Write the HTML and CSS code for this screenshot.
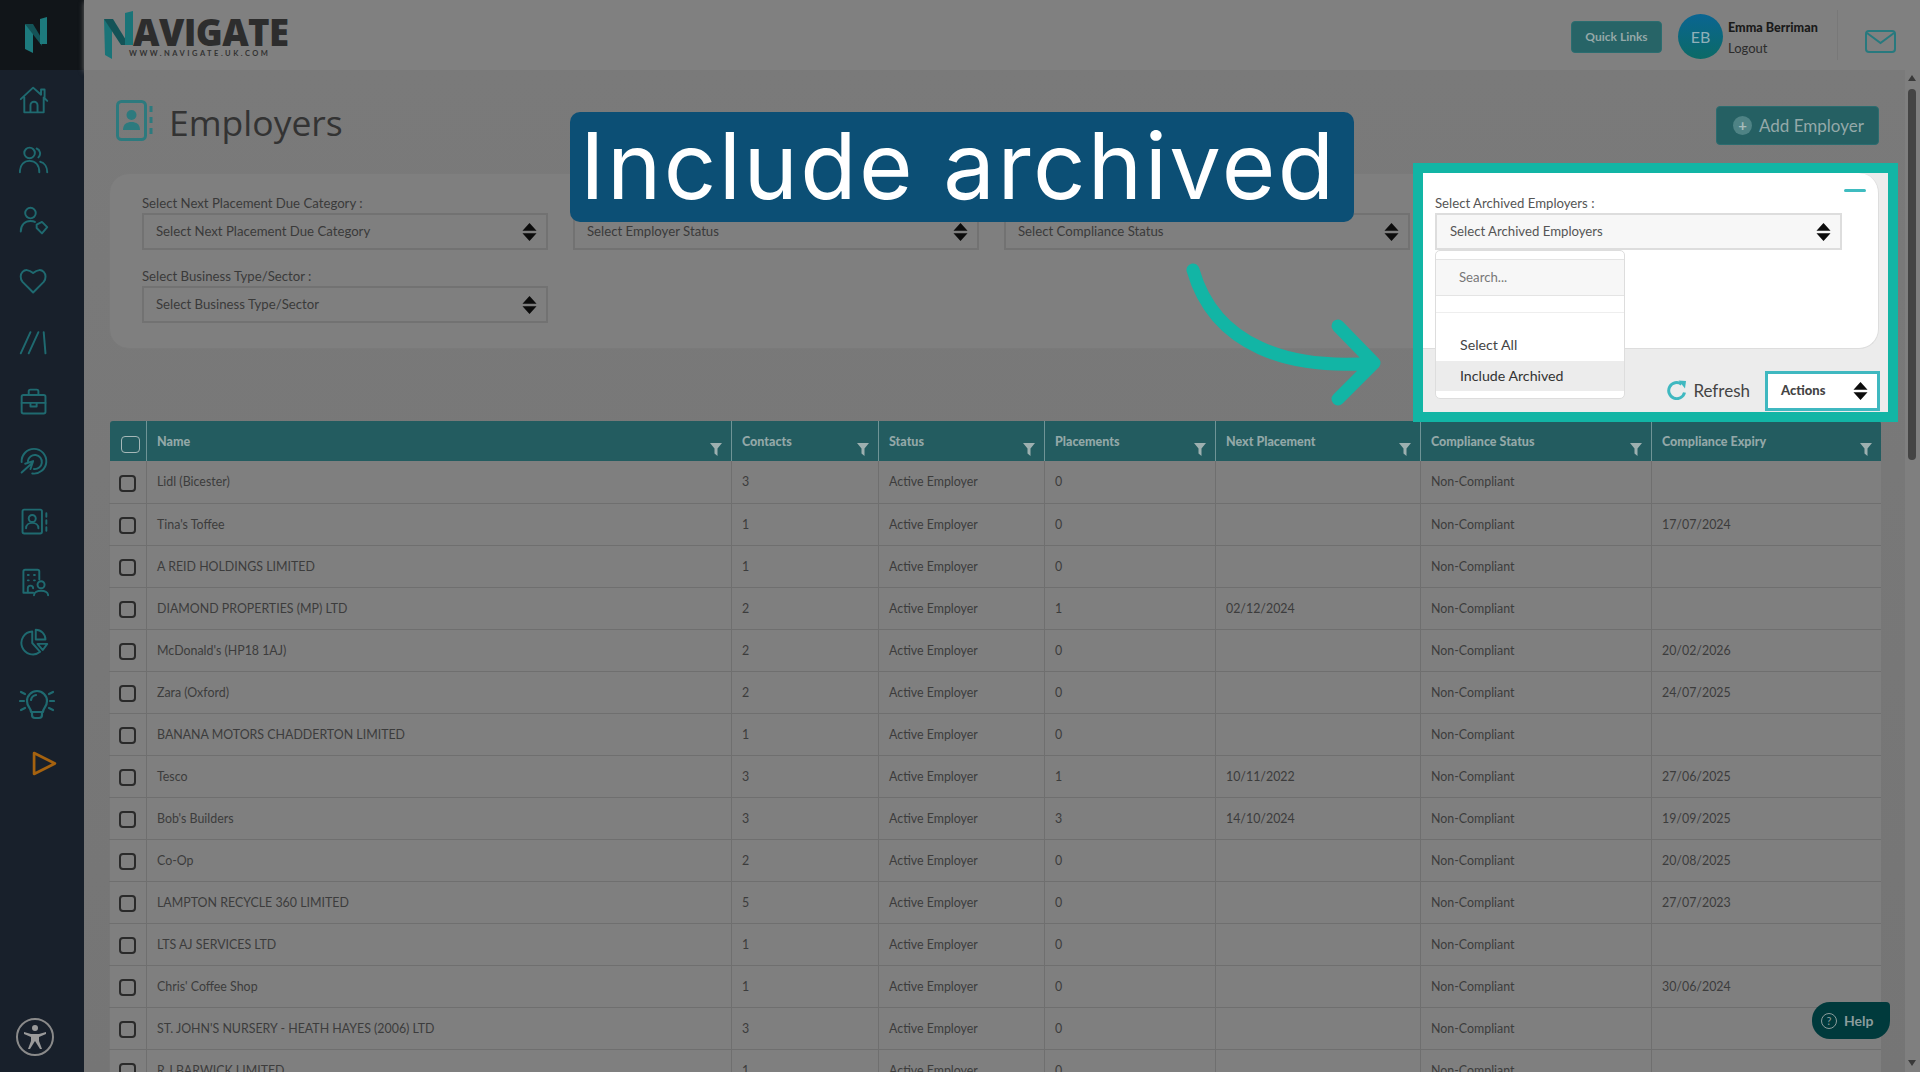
FILE: index.html
```html
<!DOCTYPE html>
<html>
<head>
	<title>Employers</title>
	<link rel="stylesheet" href="styles.css">
</head>
<body>
<svg class="defs" width="0" height="0">
	<symbol id="sort" viewBox="0 0 16 20" preserveAspectRatio="none"><path d="M8 0l7.500 8.500h-15zM8 20l-7.500-8.500h15z"/></symbol>
	<symbol id="funnel" viewBox="0 0 12 13"><path d="M0 0h12l-4.500 5.500v7.500l-3-2.500v-5z"/></symbol>
	<symbol id="contact" viewBox="0 0 38 42"><rect x="1.500" y="1.500" width="28" height="38" rx="4" fill="none" stroke="currentColor" stroke-width="3"/><circle cx="15.500" cy="15" r="5" fill="currentColor"/><path d="M7 30c0-6 4-8 8.500-8s8.500 2 8.500 8z" fill="currentColor"/><path d="M35 6v6M35 17v6M35 28v6" stroke="currentColor" stroke-width="3"/></symbol>
</svg>

<aside class="sidebar">
	<div class="brand">
		<svg width="24" height="36" viewBox="0 0 24 36"><path d="M1 7l8 5v24l-8-4z" fill="#1d7a7d"/><path d="M1 7h8l9 15v7z" fill="#145357"/><path d="M16 2l7-2v27h-7z" fill="#1d7a7d"/></svg>
	</div>
	<nav class="side-nav">
		<a><svg viewBox="0 0 34 34"><path d="M2 16L16 3l9 8v-6h4v10l3 3M6 14v17h22V14M13 31v-8a4 4 0 0 1 8 0v8"/></svg></a>
		<a><svg viewBox="0 0 34 34"><circle cx="12" cy="9" r="6"/><path d="M1 31c0-9 5-13 11-13s11 4 11 13M20 4a6 6 0 0 1 2 10M24 19c5 1 8 6 8 12"/></svg></a>
		<a><svg viewBox="0 0 34 34"><circle cx="13" cy="8" r="6"/><path d="M2 29c0-8 5-12 11-12 2 0 4 .4 5 1M20 21l6-3 6 6-6 7-6-6z"/></svg></a>
		<a><svg viewBox="0 0 34 34"><path d="M16 30L4 18C-2 10 6-1 16 8c10-9 18 2 12 10z"/></svg></a>
		<a><svg viewBox="0 0 34 34"><path d="M2 31L13 7M11 31L22 7M28 7l2 24"/></svg></a>
		<a><svg viewBox="0 0 34 34"><rect x="3" y="9" width="27" height="21" rx="2"/><path d="M11 9V5a2 2 0 0 1 2-2h7a2 2 0 0 1 2 2v4M3 18h27M13 18v4h7v-4"/></svg></a>
		<a><svg viewBox="0 0 34 34"><path d="M3 17A14 14 0 1 1 15 30M10 16a8 8 0 1 1 7 9M3 29l11-10M7 19l9-3-3 9"/></svg></a>
		<a><svg viewBox="0 0 34 34"><rect x="4" y="3" width="22" height="27" rx="2"/><circle cx="15" cy="13" r="4"/><path d="M8 24c0-8 14-8 14 0M31 7v4M31 15v4M31 23v4"/></svg></a>
		<a><svg viewBox="0 0 34 34"><path d="M16 28H5V4a2 2 0 0 1 2-2h14a2 2 0 0 1 2 2v9M10 8h1M17 8h1M10 14h1M17 14h1M10 28v-5a3 3 0 0 1 6 0"/><circle cx="25" cy="19" r="4"/><path d="M17 31c0-7 16-7 16 0"/></svg></a>
		<a><svg viewBox="0 0 34 34"><path d="M15 4a13 13 0 1 0 9 23l-9-10zM19 2a11 11 0 0 1 11 11H19zM21 18h11l-5 7z"/></svg></a>
		<a class="wide"><svg viewBox="0 0 36 34"><path d="M12 26c0-4-4-5-4-11a10 10 0 0 1 20 0c0 6-4 7-4 11zM13 26v3a3 3 0 0 0 3 3h4a3 3 0 0 0 3-3v-3M12 14a6 6 0 0 1 5-5M2 6l4 2M34 6l-4 2M1 15h4M35 15h-4M2 24l4-2M34 24l-4-2"/></svg></a>
		<a class="play"><svg viewBox="0 0 24 24"><path d="M2 2l20 10L2 22z"/></svg></a>
	</nav>
	<div class="access">
		<svg width="24" height="26" viewBox="0 0 24 26"><circle cx="12" cy="4" r="3"/><path d="M1 8l7 2h8l7-2v2l-7 3v4l3 8h-2l-5-8-5 8H5l3-8v-4L1 10z"/></svg>
	</div>
</aside>

<div class="wrap">
	<header class="topbar">
		<div class="logo">
			<svg width="31" height="48" viewBox="0 0 31 48"><path d="M0 8l8 5v35l-7-4z" fill="#1a7478"/><path d="M0 8h9l16 26H17z" fill="#145357"/><path d="M21 2l8-2v34h-8z" fill="#1a7478"/></svg>
			<div>
				<div class="logo-name">AVIGATE</div>
				<div class="logo-url">WWW.NAVIGATE.UK.COM</div>
			</div>
		</div>
		<div class="top-right">
			<a class="quick">Quick Links</a>
			<div class="avatar">EB</div>
			<div class="who">
				<b>Emma Berriman</b>
				<span>Logout</span>
			</div>
			<div class="mail">
				<svg width="31" height="23" viewBox="0 0 31 23"><rect x="1" y="1" width="29" height="21" rx="3"/><path d="M2 3l13.500 10L29 3"/></svg>
			</div>
		</div>
	</header>

	<div class="body-row">
		<main class="content">
			<div class="title-row">
				<h1 class="page-title"><svg class="title-icon" width="38" height="42"><use href="#contact"/></svg>Employers</h1>
				<a class="add-btn"><span class="plus">+</span>Add Employer</a>
			</div>

			<section class="filters">
				<div class="field"><label>Select Next Placement Due Category :</label><div class="select">Select Next Placement Due Category<svg class="sort"><use href="#sort"/></svg></div></div>
				<div class="field"><label></label><div class="select">Select Employer Status<svg class="sort"><use href="#sort"/></svg></div></div>
				<div class="field"><label></label><div class="select">Select Compliance Status<svg class="sort"><use href="#sort"/></svg></div></div>
				<div class="field"></div>
				<div class="field"><label>Select Business Type/Sector :</label><div class="select">Select Business Type/Sector<svg class="sort"><use href="#sort"/></svg></div></div>
			</section>

			<table class="grid">
				<colgroup>
					<col class="c-check"><col class="c-name"><col class="c-contacts"><col class="c-status"><col class="c-place"><col class="c-next"><col class="c-comp"><col class="c-exp">
				</colgroup>
				<thead>
					<tr>
						<th><span class="box box-head"></span></th>
						<th>Name<svg class="funnel"><use href="#funnel"/></svg></th>
						<th>Contacts<svg class="funnel"><use href="#funnel"/></svg></th>
						<th>Status<svg class="funnel"><use href="#funnel"/></svg></th>
						<th>Placements<svg class="funnel"><use href="#funnel"/></svg></th>
						<th>Next Placement<svg class="funnel"><use href="#funnel"/></svg></th>
						<th>Compliance Status<svg class="funnel"><use href="#funnel"/></svg></th>
						<th>Compliance Expiry<svg class="funnel"><use href="#funnel"/></svg></th>
					</tr>
				</thead>
				<tbody>
					<tr><td><span class="box"></span></td><td>Lidl (Bicester)</td><td>3</td><td>Active Employer</td><td>0</td><td></td><td>Non-Compliant</td><td></td></tr>
					<tr><td><span class="box"></span></td><td>Tina's Toffee</td><td>1</td><td>Active Employer</td><td>0</td><td></td><td>Non-Compliant</td><td>17/07/2024</td></tr>
					<tr><td><span class="box"></span></td><td>A REID HOLDINGS LIMITED</td><td>1</td><td>Active Employer</td><td>0</td><td></td><td>Non-Compliant</td><td></td></tr>
					<tr><td><span class="box"></span></td><td>DIAMOND PROPERTIES (MP) LTD</td><td>2</td><td>Active Employer</td><td>1</td><td>02/12/2024</td><td>Non-Compliant</td><td></td></tr>
					<tr><td><span class="box"></span></td><td>McDonald's (HP18 1AJ)</td><td>2</td><td>Active Employer</td><td>0</td><td></td><td>Non-Compliant</td><td>20/02/2026</td></tr>
					<tr><td><span class="box"></span></td><td>Zara (Oxford)</td><td>2</td><td>Active Employer</td><td>0</td><td></td><td>Non-Compliant</td><td>24/07/2025</td></tr>
					<tr><td><span class="box"></span></td><td>BANANA MOTORS CHADDERTON LIMITED</td><td>1</td><td>Active Employer</td><td>0</td><td></td><td>Non-Compliant</td><td></td></tr>
					<tr><td><span class="box"></span></td><td>Tesco</td><td>3</td><td>Active Employer</td><td>1</td><td>10/11/2022</td><td>Non-Compliant</td><td>27/06/2025</td></tr>
					<tr><td><span class="box"></span></td><td>Bob's Builders</td><td>3</td><td>Active Employer</td><td>3</td><td>14/10/2024</td><td>Non-Compliant</td><td>19/09/2025</td></tr>
					<tr><td><span class="box"></span></td><td>Co-Op</td><td>2</td><td>Active Employer</td><td>0</td><td></td><td>Non-Compliant</td><td>20/08/2025</td></tr>
					<tr><td><span class="box"></span></td><td>LAMPTON RECYCLE 360 LIMITED</td><td>5</td><td>Active Employer</td><td>0</td><td></td><td>Non-Compliant</td><td>27/07/2023</td></tr>
					<tr><td><span class="box"></span></td><td>LTS AJ SERVICES LTD</td><td>1</td><td>Active Employer</td><td>0</td><td></td><td>Non-Compliant</td><td></td></tr>
					<tr><td><span class="box"></span></td><td>Chris' Coffee Shop</td><td>1</td><td>Active Employer</td><td>0</td><td></td><td>Non-Compliant</td><td>30/06/2024</td></tr>
					<tr><td><span class="box"></span></td><td>ST. JOHN'S NURSERY - HEATH HAYES (2006) LTD</td><td>3</td><td>Active Employer</td><td>0</td><td></td><td>Non-Compliant</td><td></td></tr>
					<tr><td><span class="box"></span></td><td>R J BARWICK LIMITED</td><td>1</td><td>Active Employer</td><td>0</td><td></td><td>Non-Compliant</td><td></td></tr>
				</tbody>
			</table>
		</main>

		<div class="scrollbar">
			<i class="arrow-up"></i>
			<div class="thumb"></div>
			<i class="arrow-down"></i>
		</div>
	</div>
</div>

<!-- things laid over the dimmed page -->
<div class="help"><span class="help-q">?</span>Help</div>

<div class="tag">Include archived</div>

<svg class="pointer" width="210" height="150" viewBox="0 0 210 150">
	<path d="M8 8C30 85 105 108 189 101M153 64l36 37-36 36"/>
</svg>

<div class="spot">
	<div class="spot-card">
		<a class="collapse"></a>
		<label>Select Archived Employers :</label>
		<div class="spot-select">Select Archived Employers<svg class="sort"><use href="#sort"/></svg></div>
		<div class="menu">
			<div class="menu-search">Search...</div>
			<div class="menu-empty"></div>
			<div class="menu-item first">Select All</div>
			<div class="menu-item active">Include Archived</div>
		</div>
	</div>
	<div class="spot-tools">
		<a class="refresh">
			<svg width="20" height="20" viewBox="0 0 20 20"><path d="M14.500 4.200A8 8 0 1 0 17.500 12.500"/><path class="fill" d="M11.500 0.500L19 1 18 8.500z"/></svg>
			Refresh
		</a>
		<a class="actions">Actions<svg class="sort"><use href="#sort"/></svg></a>
	</div>
</div>
</body>
</html>
```

FILE: styles.css
```css
*{
	padding: 0px;
	margin: 0px;
	box-sizing: border-box;
}
html, body{
	height: 100%;
	overflow: hidden;
}
body{
	display: flex;
	font-family: "Lato", "Liberation Sans", sans-serif;
	font-size: 13px;
	color: #3a3a3a;
	background-color: #787878;
}
.defs{
	position: absolute;
}
a{
	display: block;
}

/* sidebar */
.sidebar{
	width: 84px;
	flex-shrink: 0;
	display: flex;
	flex-direction: column;
	background-color: #18202b;
}
.brand{
	height: 70px;
	display: flex;
	align-items: center;
	justify-content: center;
	padding-right: 12px;
	background-color: #111519;
}
.side-nav a{
	height: 60.300px;
	display: flex;
	align-items: center;
	padding-left: 19px;
}
.side-nav svg{
	width: 30px;
	height: 30px;
	fill: none;
	stroke: #1f6a70;
	stroke-width: 2.200;
	stroke-linecap: round;
	stroke-linejoin: round;
}
.side-nav .wide svg{
	width: 36px;
	height: 34px;
}
.side-nav .play{
	padding-left: 32px;
}
.side-nav .play svg{
	width: 25px;
	height: 25px;
	stroke: #a5620f;
	stroke-width: 2.600;
}
.access{
	width: 38px;
	height: 38px;
	margin: auto 0 16px 16px;
	display: flex;
	align-items: center;
	justify-content: center;
	border: 2px solid #8a8a8a;
	border-radius: 50%;
}
.access svg{
	fill: #9a9a9a;
}

/* top bar */
.wrap{
	flex: 1;
	min-width: 0;
	display: flex;
	flex-direction: column;
}
.topbar{
	height: 70px;
	flex-shrink: 0;
	display: flex;
	align-items: center;
	justify-content: space-between;
	padding: 0 24px 0 20px;
	background-color: #808080;
	box-shadow: 0 2px 5px #666;
}
.logo{
	display: flex;
	align-items: flex-start;
}
.logo-name{
	margin: 8px 0 0 -2px;
	font-family: "Open Sans", sans-serif;
	font-size: 36.500px;
	line-height: 26px;
	font-weight: 800;
	letter-spacing: -0.600px;
	color: #2d2d2d;
}
.logo-url{
	margin: 5px 0 0 -6px;
	font-size: 7.500px;
	line-height: 8px;
	font-weight: 700;
	letter-spacing: 2.500px;
	color: #333;
}
.top-right{
	display: flex;
	align-items: center;
}
.quick{
	width: 91px;
	height: 32px;
	margin: 4px 16px 0 0;
	line-height: 30px;
	text-align: center;
	font-size: 12px;
	font-weight: 700;
	color: #95a8a8;
	background-color: #276467;
	border: 1px solid #2b6d70;
	border-radius: 4px;
}
.avatar{
	width: 45px;
	height: 45px;
	margin-top: 2px;
	line-height: 45px;
	text-align: center;
	font-size: 16px;
	color: #8fb0b8;
	border-radius: 50%;
	background: linear-gradient(#0a6592, #0b6a66);
}
.who{
	width: 110px;
	height: 50px;
	margin-left: 5px;
	padding-top: 7px;
	line-height: 21px;
	border-right: 1px solid #787878;
}
.who b{
	display: block;
	font-size: 12.600px;
	font-weight: 900;
	color: #1a1a1a;
}
.who span{
	display: block;
	color: #2c2c2c;
}
.mail{
	margin: 12px 0 0 27px;
}
.mail svg{
	display: block;
	fill: none;
	stroke: #27797e;
	stroke-width: 2;
}

/* main */
.body-row{
	flex: 1;
	min-height: 0;
	display: flex;
}
.content{
	flex: 1;
	min-width: 0;
	padding: 0 25px;
	background: linear-gradient(#7a7a7a, #757575);
}
.title-row{
	height: 103px;
	display: flex;
	align-items: flex-start;
	justify-content: space-between;
}
.page-title{
	display: flex;
	align-items: center;
	margin: 30px 0 0 7px;
	font-family: "Open Sans", sans-serif;
	font-size: 35.500px;
	line-height: 44px;
	font-weight: 400;
	color: #333;
}
.title-icon{
	color: #2d7a7e;
	margin: 0 15px 2px 0;
}
.add-btn{
	display: flex;
	align-items: center;
	width: 163px;
	height: 39px;
	margin: 36px 1px 0 0;
	padding-left: 16px;
	font-size: 17px;
	color: #94a9a9;
	background-color: #256063;
	border: 1px solid #2b6c6f;
	border-radius: 4px;
}
.plus{
	width: 19px;
	height: 19px;
	line-height: 18px;
	margin-right: 7px;
	text-align: center;
	font-size: 15px;
	font-weight: 700;
	color: #a8bcbc;
	background-color: #4f8385;
	border-radius: 50%;
}

/* filter card */
.filters{
	height: 176px;
	display: grid;
	grid-template-columns: repeat(4, 406px);
	grid-auto-rows: 73px;
	column-gap: 25px;
	align-content: start;
	padding: 20px 0 0 32px;
	margin-bottom: 72px;
	background-color: #7f7f7f;
	border: 1px solid #7a7a7a;
	border-radius: 20px;
}
.field label{
	display: block;
	height: 19px;
	line-height: 18px;
	font-size: 13.200px;
	color: #3a3a3a;
}
.select{
	position: relative;
	height: 37px;
	line-height: 32px;
	padding-left: 12px;
	font-size: 13.200px;
	color: #3a3a3a;
	border: 2px solid #727272;
}
.sort{
	position: absolute;
	right: 9px;
	top: 8px;
	width: 15px;
	height: 18px;
	fill: #0c0c0c;
}

/* table */
.grid{
	width: 1771px;
	table-layout: fixed;
	border-collapse: collapse;
}
.c-check{ width: 37px; }
.c-name{ width: 585px; }
.c-contacts{ width: 147px; }
.c-status{ width: 166px; }
.c-place{ width: 171px; }
.c-next{ width: 205px; }
.c-comp{ width: 231px; }
.c-exp{ width: 229px; }
.grid th{
	position: relative;
	height: 40px;
	padding: 2px 10px 0 10px;
	text-align: left;
	font-size: 12.500px;
	font-weight: 900;
	line-height: 38px;
	vertical-align: top;
	color: #93a8a8;
	background-color: #235c60;
	border-left: 1px solid #6f9496;
}
.grid th:first-child{
	padding-top: 0;
	border-left: 0;
	border-radius: 3px 0 0 0;
}
.grid th:last-child{
	border-radius: 0 3px 0 0;
}
.grid td{
	height: 42px;
	padding: 0 0 0 10px;
	font-size: 12.400px;
	color: #3c3c3c;
	background-color: #7f7f7f;
	border-left: 1px solid #6f6f6f;
	border-bottom: 1px solid #6f6f6f;
}
.grid td:first-child{
	padding: 3px 0 0 9px;
	border-left: 1px solid #777;
}
.funnel{
	position: absolute;
	right: 9px;
	top: 22px;
	width: 12px;
	height: 13px;
	fill: #9db0b0;
}
.box{
	display: block;
	width: 17px;
	height: 17px;
	border: 2px solid #2a2a2a;
	border-radius: 4px;
}
.box-head{
	width: 19px;
	height: 17px;
	margin: 15px 0 0 1px;
	border: 1px solid #a6b8b8;
}

/* scrollbar */
.scrollbar{
	position: relative;
	width: 15px;
	flex-shrink: 0;
	padding: 5px 0 0 3px;
	background-color: #7f7f7f;
}
.arrow-up, .arrow-down{
	display: block;
	width: 0;
	height: 0;
	border-left: 4px solid transparent;
	border-right: 4px solid transparent;
}
.arrow-up{
	border-bottom: 6px solid #3a3a3a;
}
.arrow-down{
	position: absolute;
	left: 3px;
	bottom: 6px;
	border-top: 6px solid #3a3a3a;
}
.thumb{
	width: 8px;
	height: 371px;
	margin-top: 8px;
	background-color: #444;
	border-radius: 4px;
}

/* help tab */
.help{
	position: absolute;
	left: 1812px;
	top: 1002px;
	width: 78px;
	height: 37px;
	display: flex;
	align-items: center;
	padding-left: 9px;
	font-size: 14px;
	font-weight: 700;
	color: #8c9c9c;
	background-color: #003a3c;
	border-radius: 18px 4px 18px 18px;
}
.help-q{
	width: 16px;
	height: 16px;
	line-height: 14px;
	margin-right: 7px;
	text-align: center;
	font-size: 11px;
	font-weight: 400;
	border: 1px solid #8c9c9c;
	border-radius: 50%;
}

/* annotation */
.tag{
	position: absolute;
	left: 570px;
	top: 112px;
	width: 784px;
	height: 110px;
	padding-left: 10px;
	font-family: "Inter", sans-serif;
	font-size: 92px;
	line-height: 108px;
	letter-spacing: 2.400px;
	white-space: nowrap;
	color: #fff;
	background-color: #0c4f75;
	border-radius: 10px;
}
.pointer{
	position: absolute;
	left: 1185px;
	top: 262px;
}
.pointer path{
	fill: none;
	stroke: #12b5a5;
	stroke-width: 13;
	stroke-linecap: round;
	stroke-linejoin: round;
}
.spot{
	position: absolute;
	left: 1413px;
	top: 163px;
	width: 485px;
	height: 259px;
	display: flex;
	flex-direction: column;
	background-color: #ececec;
	border: 10px solid #12b5a5;
}
.spot-card{
	position: relative;
	height: 176px;
	width: 456px;
	padding: 21px 0 0 12px;
	background-color: #fff;
	border: 1px solid #ddd;
	border-width: 0 1px 1px 0;
	border-radius: 0 20px 20px 0;
}
.spot-card label{
	display: block;
	height: 19px;
	line-height: 18px;
	font-size: 13.200px;
	color: #555;
}
.spot-select{
	position: relative;
	width: 407px;
	height: 37px;
	line-height: 32px;
	padding-left: 13px;
	font-size: 13.200px;
	color: #555;
	background-color: #f7f7f7;
	border: 2px solid #ddd;
}
.collapse{
	position: absolute;
	right: 12px;
	top: 16px;
	width: 22px;
	height: 3px;
	background-color: #3fbcc0;
	border-radius: 2px;
}
.menu{
	position: absolute;
	left: 12px;
	top: 77px;
	width: 190px;
	height: 149px;
	padding-top: 8px;
	background-color: #fff;
	border: 1px solid #ddd;
	border-radius: 5px;
	z-index: 1;
}
.menu-search{
	height: 37px;
	line-height: 35px;
	padding-left: 23px;
	font-size: 13.200px;
	color: #777;
	background-color: #f7f7f7;
	border-top: 1px solid #e4e4e4;
	border-bottom: 1px solid #e4e4e4;
}
.menu-empty{
	height: 17px;
	border-bottom: 1px solid #eee;
}
.menu-item{
	height: 30px;
	line-height: 30px;
	padding-left: 24px;
	font-size: 14.200px;
	color: #444;
}
.menu-item.first{
	margin-top: 17px;
	height: 31px;
}
.menu-item.active{
	color: #333;
	background-color: #ececec;
}
.spot-tools{
	flex: 1;
	display: flex;
	align-items: flex-end;
	justify-content: flex-end;
	padding: 0 8px 1px 0;
}
.refresh{
	display: flex;
	align-items: center;
	height: 38px;
	margin: 0 15px 2px 0;
	font-size: 17px;
	color: #444;
}
.refresh svg{
	margin-right: 6px;
	fill: none;
	stroke: #3fb8c0;
	stroke-width: 3;
}
.refresh .fill{
	fill: #3fb8c0;
	stroke: none;
}
.actions{
	position: relative;
	width: 115px;
	height: 40px;
	line-height: 33px;
	padding-left: 13px;
	font-weight: 900;
	color: #444;
	background-color: #fff;
	border: 3px solid #3fb8c0;
}
.actions .sort{
	right: 9px;
	top: 8px;
}
```
